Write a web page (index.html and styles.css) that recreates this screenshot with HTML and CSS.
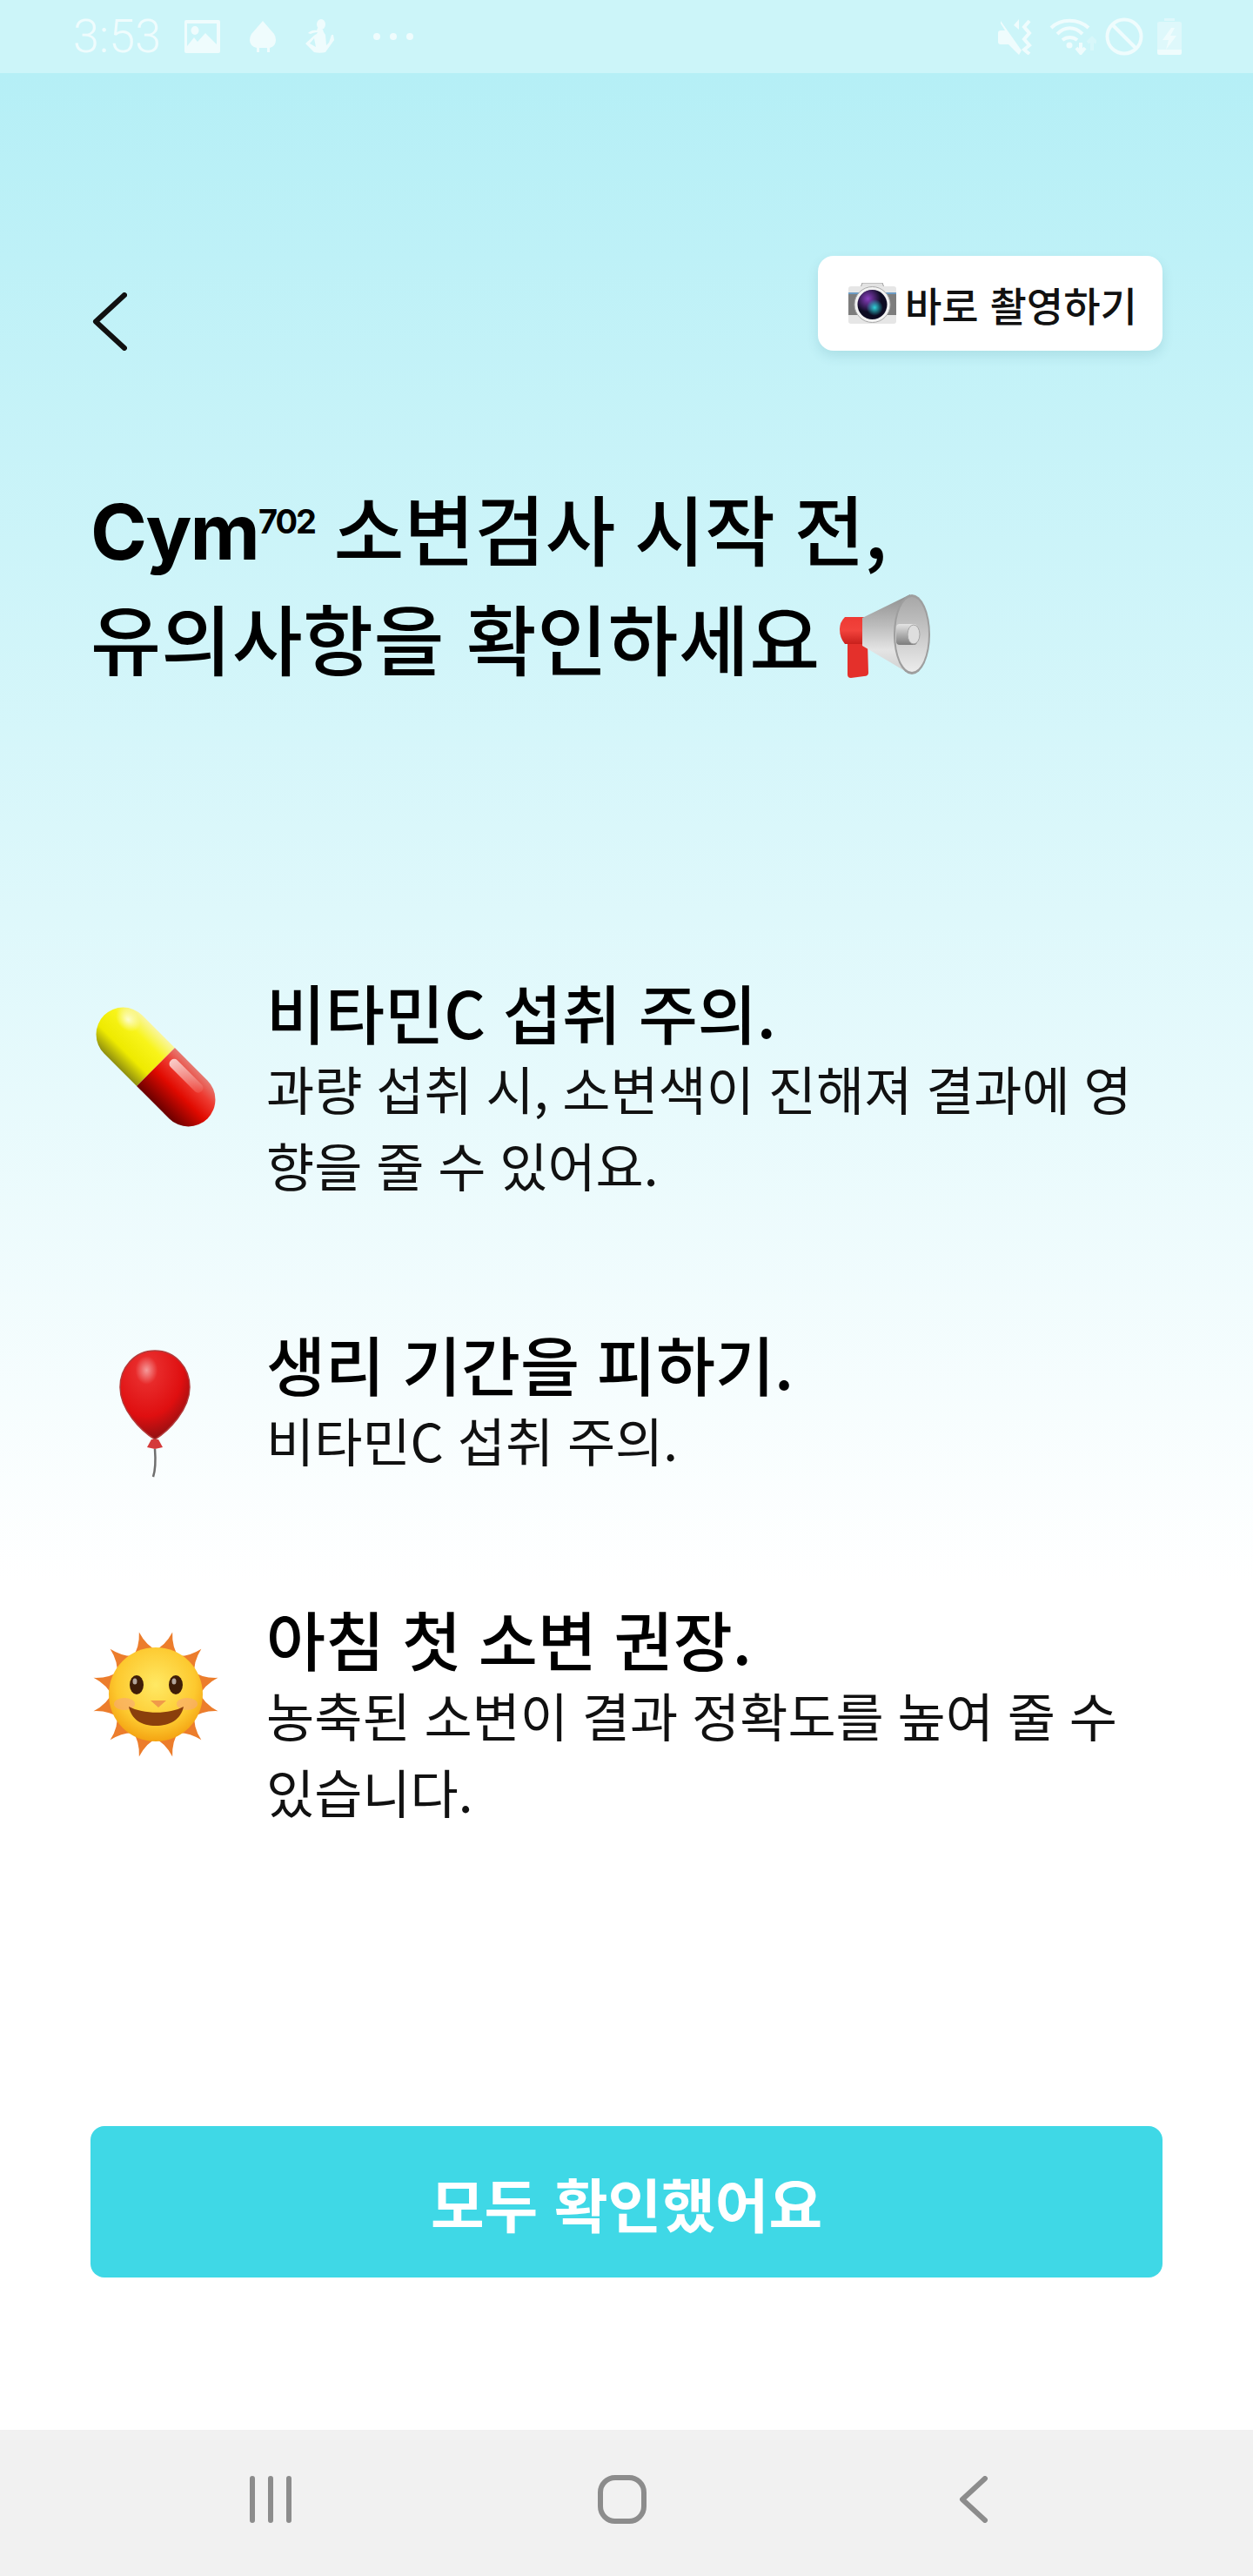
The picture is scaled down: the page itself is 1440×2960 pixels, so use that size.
FILE: index.html
```html
<!DOCTYPE html>
<html lang="ko">

<head>
    <meta charset="UTF-8">
    <meta name="viewport" content="width=device-width, initial-scale=1.0">
    <title>Cym702</title>
    <link rel="stylesheet" href="styles.css">
</head>

<body>
    <div class="screen">
        <div class="status-bar">
            <div class="status-left">
                <span class="clock">3:53</span>
                <svg class="st-image" viewBox="0 0 41 38">
                    <path fill-rule="evenodd" d="M2 0H39A2 2 0 0 1 41 2V36A2 2 0 0 1 39 38H2A2 2 0 0 1 0 36V2A2 2 0 0 1 2 0ZM3 4V30L11 20 15 25 24 15 37 28V4Z" />
                    <ellipse cx="12" cy="12" rx="4.500" ry="5" />
                </svg>
                <svg class="st-drop" viewBox="0 0 30 36">
                    <path d="M15 0 28 15Q30 18 30 22 30 29 23 31V36H20V31H11V36H8V31Q0 29 0 22 0 18 2 15Z" />
                </svg>
                <svg class="st-figure" viewBox="0 0 35 40">
                    <ellipse cx="19" cy="6" rx="5" ry="6" />
                    <path d="M15 10 14 13C10 12 6 14 4 16L7 17C9 16 12 15 15 15L14 17C11 18 9 21 1 28L11 38C15 39 20 39 24 38L34 24 33 18 31 18 28 27 25 30 24 18 22 15 21 12ZM11 22 13 32 6 28Z" fill-rule="evenodd" />
                </svg>
                <div class="st-dots"><i></i><i></i><i></i></div>
            </div>
            <div class="status-right">
                <svg class="st-mute" viewBox="0 0 41 41">
                    <path d="M3 2 27 36 24 41 12 29H3A3 3 0 0 1 0 26V16A3 3 0 0 1 3 13H8L3 5ZM24 0V12L18 7Z" />
                    <path d="M36 2 30 9 36 16 30 23 36 30 30 35 36 40" fill="none" stroke-width="4" />
                </svg>
                <svg class="st-wifi" viewBox="0 0 54 42">
                    <path d="M2 11C13 0 33 0 45 11M9 18C18 9 29 9 38 18M15 25C20 21 27 21 32 25" fill="none" stroke-width="4" />
                    <circle cx="23" cy="31" r="3.500" />
                    <path d="M36 28V38M31 34 36 40 41 34" fill="none" stroke-width="4" />
                    <path d="M49 37V23M44 28 49 23 54 28" fill="none" stroke-width="4" opacity="0.35" />
                </svg>
                <svg class="st-block" viewBox="0 0 44 44">
                    <circle cx="22" cy="22" r="19.500" fill="none" stroke-width="4" />
                    <path d="M9 9 35 35" fill="none" stroke-width="4" />
                </svg>
                <svg class="st-battery" viewBox="0 0 28 42">
                    <path d="M8 0H20V3H8Z" opacity="0.5" />
                    <path d="M2 4H26A2 2 0 0 1 28 6V36H0V6A2 2 0 0 1 2 4Z" opacity="0.5" />
                    <path d="M0 36H28V40A2 2 0 0 1 26 42H2A2 2 0 0 1 0 40Z" />
                    <path d="M16 11 6 25H13L10 36 22 20H15L20 11Z" />
                </svg>
            </div>
        </div>

        <main class="content">
            <div class="top-row">
                <svg class="back" viewBox="0 0 40 67">
                    <path d="M37 3 4 33.500 37 64" fill="none" stroke="#111" stroke-width="6" stroke-linecap="round" stroke-linejoin="round" />
                </svg>
                <div class="shoot-btn">
                    <svg class="ic-camera" viewBox="0 0 55 48">
                        <defs>
                            <radialGradient id="lens-purple" cx="35%" cy="30%" r="45%">
                                <stop offset="0" stop-color="#8a3fc0" />
                                <stop offset="1" stop-color="#8a3fc0" stop-opacity="0" />
                            </radialGradient>
                            <radialGradient id="lens-cyan" cx="58%" cy="60%" r="28%">
                                <stop offset="0" stop-color="#2fd0d8" />
                                <stop offset="1" stop-color="#2fd0d8" stop-opacity="0" />
                            </radialGradient>
                        </defs>
                        <path d="M13 8 16 0H39L42 8Z" fill="#e2e2e2" stroke="#a0a0a0" />
                        <rect x="0" y="4" width="55" height="43" rx="3" fill="#e6e6e6" />
                        <rect x="0" y="11" width="55" height="2" fill="#6d9cc4" />
                        <rect x="0" y="13" width="55" height="24" fill="#7d7d7d" />
                        <circle cx="27.500" cy="25" r="20.500" fill="#f2f2f2" stroke="#aaa" />
                        <circle cx="27.500" cy="25" r="17" fill="#0d0b22" />
                        <circle cx="27.500" cy="25" r="17" fill="url(#lens-purple)" />
                        <circle cx="27.500" cy="25" r="17" fill="url(#lens-cyan)" />
                    </svg>
                    <span>바로 촬영하기</span>
                </div>
            </div>

            <h1 class="title">
                <span class="title-first"><span class="brand">Cym<sup>702</sup></span> 소변검사 시작 전,</span><br>
                <span class="title-second">유의사항을 확인하세요</span>
                <svg class="ic-mega" viewBox="0 0 106 96">
                    <defs>
                        <linearGradient id="cone" x1="0" y1="0" x2="0" y2="1">
                            <stop offset="0" stop-color="#8f8f8f" />
                            <stop offset="0.4" stop-color="#bdbdbd" />
                            <stop offset="0.7" stop-color="#e4e4e4" />
                            <stop offset="1" stop-color="#cfcfcf" />
                        </linearGradient>
                        <linearGradient id="bell" x1="0" y1="0" x2="0" y2="1">
                            <stop offset="0" stop-color="#a8a8a8" />
                            <stop offset="0.5" stop-color="#c8c8c8" />
                            <stop offset="1" stop-color="#ececec" />
                        </linearGradient>
                        <linearGradient id="tube" x1="0" y1="0" x2="0" y2="1">
                            <stop offset="0" stop-color="#e4e4e4" />
                            <stop offset="1" stop-color="#7d7d7d" />
                        </linearGradient>
                        <linearGradient id="collar" x1="0" y1="0" x2="0" y2="1">
                            <stop offset="0" stop-color="#ee3a34" />
                            <stop offset="0.5" stop-color="#f2433c" />
                            <stop offset="1" stop-color="#c9201c" />
                        </linearGradient>
                    </defs>
                    <path d="M11 56H34L35 90Q35 94 30 94L15 96Q11 96 11 92Z" fill="#e4302b" />
                    <path d="M8 26H34V57H8Q2 50 2 40 2 32 8 26Z" fill="url(#collar)" />
                    <path d="M28 27 83 0 82 91 28 59Z" fill="url(#cone)" />
                    <ellipse cx="85" cy="46" rx="21" ry="46" fill="#9e9e9e" />
                    <ellipse cx="85" cy="46" rx="19" ry="43" fill="url(#bell)" />
                    <rect x="67" y="34" width="24" height="24" rx="4" fill="url(#tube)" />
                    <ellipse cx="87" cy="46" rx="7" ry="11" fill="#dedede" stroke="#a5a5a5" />
                </svg>
            </h1>

            <div class="notice-list">
                <div class="notice">
                    <svg class="notice-icon" viewBox="0 0 150 170">
                        <defs>
                            <linearGradient id="pill-y" x1="0" y1="0" x2="0" y2="1">
                                <stop offset="0" stop-color="#f9f6a0" />
                                <stop offset="0.3" stop-color="#f8f41a" />
                                <stop offset="0.7" stop-color="#eeea00" />
                                <stop offset="1" stop-color="#8f8f10" />
                            </linearGradient>
                            <linearGradient id="pill-r" x1="0" y1="0" x2="0" y2="1">
                                <stop offset="0" stop-color="#e57a72" />
                                <stop offset="0.25" stop-color="#ee3a30" />
                                <stop offset="0.55" stop-color="#e00a00" />
                                <stop offset="1" stop-color="#6a0000" />
                            </linearGradient>
                            <radialGradient id="pill-cap" cx="50%" cy="50%" r="50%">
                                <stop offset="0" stop-color="#fff" stop-opacity="0.75" />
                                <stop offset="1" stop-color="#fff" stop-opacity="0" />
                            </radialGradient>
                            <linearGradient id="pill-shine" x1="0" y1="0" x2="1" y2="0">
                                <stop offset="0" stop-color="#fbdcd9" stop-opacity="0.9" />
                                <stop offset="1" stop-color="#fbdcd9" stop-opacity="0.1" />
                            </linearGradient>
                        </defs>
                        <g transform="rotate(45 75 82)">
                            <path d="M75 51H22A31 31 0 0 0 22 113H75Z" fill="url(#pill-y)" />
                            <path d="M75 51H128A31 31 0 0 1 128 113H75Z" fill="url(#pill-r)" />
                            <ellipse cx="14" cy="66" rx="16" ry="12" fill="url(#pill-cap)" />
                            <rect x="82" y="59" width="50" height="11" rx="5" fill="url(#pill-shine)" />
                        </g>
                    </svg>
                    <div class="notice-text">
                        <h2>비타민C 섭취 주의.</h2>
                        <p>과량 섭취 시, 소변색이 진해져 결과에 영향을 줄 수 있어요.</p>
                    </div>
                </div>
                <div class="notice">
                    <svg class="notice-icon" viewBox="0 0 150 170">
                        <defs>
                            <radialGradient id="balloon" cx="38%" cy="22%" r="80%">
                                <stop offset="0" stop-color="#f59a9a" />
                                <stop offset="0.2" stop-color="#e82a2a" />
                                <stop offset="0.65" stop-color="#df0f10" />
                                <stop offset="1" stop-color="#8d1012" />
                            </radialGradient>
                        </defs>
                        <path d="M74 4C98 4 114 24 114 46 114 72 90 96 74 106 58 96 34 72 34 46 34 24 50 4 74 4Z" fill="url(#balloon)" stroke="#b33a3a" stroke-width="1.500" />
                        <path d="M70 106H78L83 115 74 117 65 115Z" fill="#d43a3a" />
                        <path d="M74 117C75 130 75 140 72 149" fill="none" stroke="#6f6f6f" stroke-width="2.500" />
                    </svg>
                    <div class="notice-text">
                        <h2>생리 기간을 피하기.</h2>
                        <p>비타민C 섭취 주의.</p>
                    </div>
                </div>
                <div class="notice">
                    <svg class="notice-icon" viewBox="0 0 150 170">
                        <defs>
                            <radialGradient id="sun-face" cx="50%" cy="40%" r="60%">
                                <stop offset="0" stop-color="#ffe964" />
                                <stop offset="0.7" stop-color="#fdc92f" />
                                <stop offset="1" stop-color="#f4a312" />
                            </radialGradient>
                        </defs>
                        <g transform="translate(1 -6)">
                            <g fill="#ec7d2c">
                                <path d="M-16 -47Q-4 -56 0 -74 4 -56 16 -47Z" transform="translate(74 89) rotate(15)" />
                                <path d="M-16 -47Q-4 -56 0 -74 4 -56 16 -47Z" transform="translate(74 89) rotate(45)" />
                                <path d="M-16 -47Q-4 -56 0 -74 4 -56 16 -47Z" transform="translate(74 89) rotate(75)" />
                                <path d="M-16 -47Q-4 -56 0 -74 4 -56 16 -47Z" transform="translate(74 89) rotate(105)" />
                                <path d="M-16 -47Q-4 -56 0 -74 4 -56 16 -47Z" transform="translate(74 89) rotate(135)" />
                                <path d="M-16 -47Q-4 -56 0 -74 4 -56 16 -47Z" transform="translate(74 89) rotate(165)" />
                                <path d="M-16 -47Q-4 -56 0 -74 4 -56 16 -47Z" transform="translate(74 89) rotate(195)" />
                                <path d="M-16 -47Q-4 -56 0 -74 4 -56 16 -47Z" transform="translate(74 89) rotate(225)" />
                                <path d="M-16 -47Q-4 -56 0 -74 4 -56 16 -47Z" transform="translate(74 89) rotate(255)" />
                                <path d="M-16 -47Q-4 -56 0 -74 4 -56 16 -47Z" transform="translate(74 89) rotate(285)" />
                                <path d="M-16 -47Q-4 -56 0 -74 4 -56 16 -47Z" transform="translate(74 89) rotate(315)" />
                                <path d="M-16 -47Q-4 -56 0 -74 4 -56 16 -47Z" transform="translate(74 89) rotate(345)" />
                            </g>
                            <circle cx="74" cy="89" r="54" fill="url(#sun-face)" />
                            <ellipse cx="38" cy="100" rx="12" ry="7" fill="#f8a878" opacity="0.6" />
                            <ellipse cx="110" cy="100" rx="12" ry="7" fill="#f8a878" opacity="0.6" />
                            <ellipse cx="52" cy="78" rx="8" ry="11" fill="#3f1d08" />
                            <ellipse cx="97" cy="78" rx="8" ry="11" fill="#3f1d08" />
                            <ellipse cx="50" cy="74" rx="2.500" ry="3.500" fill="#fff" opacity="0.6" />
                            <ellipse cx="95" cy="74" rx="2.500" ry="3.500" fill="#fff" opacity="0.6" />
                            <path d="M68 96H86L77 104Z" fill="#f09a4a" />
                            <path d="M43 103C60 112 90 112 106 103 103 118 90 125 74 125 58 125 46 118 43 103Z" fill="#8a3f0c" />
                        </g>
                    </svg>
                    <div class="notice-text">
                        <h2>아침 첫 소변 권장.</h2>
                        <p>농축된 소변이 결과 정확도를 높여 줄 수 있습니다.</p>
                    </div>
                </div>
            </div>

            <div class="confirm-btn">모두 확인했어요</div>
        </main>

        <div class="nav-bar">
            <svg class="nav-recent" viewBox="0 0 48 54">
                <path d="M3 3V51M24 3V51M45 3V51" fill="none" stroke-width="6" stroke-linecap="round" />
            </svg>
            <svg class="nav-home" viewBox="0 0 58 58">
                <rect x="4" y="4" width="50" height="50" rx="17" fill="none" stroke-width="6" />
            </svg>
            <svg class="nav-back" viewBox="0 0 34 54">
                <path d="M30 3 4 27 30 51" fill="none" stroke-width="6" stroke-linecap="round" stroke-linejoin="round" />
            </svg>
        </div>
    </div>
</body>

</html>
```

FILE: styles.css
```css
* {
    box-sizing: border-box;
}

body {
    margin: 0;
    font-family: 'Noto Sans CJK KR', 'Noto Sans', sans-serif;
    color: #000;
}

.screen {
    width: 1440px;
    height: 2960px;
    display: flex;
    flex-direction: column;
    overflow: hidden;
    background: #fff;
}

/* status bar */
.status-bar {
    height: 84px;
    flex: none;
    display: flex;
    justify-content: space-between;
    align-items: center;
    padding: 0 82px 0 84px;
    background: #ccf5f9;
}

.status-left,
.status-right {
    display: flex;
    align-items: center;
}

.status-bar svg {
    fill: #effcfd;
    stroke: #effcfd;
    stroke-width: 0;
    flex: none;
}

.clock {
    font-family: Roboto, sans-serif;
    font-weight: 300;
    font-size: 54px;
    line-height: 84px;
    color: #effcfd;
}

.st-image {
    width: 41px;
    height: 38px;
    margin-left: 27px;
}

.st-drop {
    width: 30px;
    height: 36px;
    margin-left: 34px;
}

.st-figure {
    width: 35px;
    height: 40px;
    margin-left: 33px;
}

.st-dots {
    display: flex;
    gap: 11px;
    margin-left: 44px;
}

.st-dots i {
    width: 8px;
    height: 8px;
    border-radius: 50%;
    background: #effcfd;
}

.st-mute {
    width: 41px;
    height: 41px;
}

.st-wifi {
    width: 54px;
    height: 42px;
    margin-left: 18px;
}

.st-block {
    width: 44px;
    height: 44px;
    margin-left: 10px;
}

.st-battery {
    width: 28px;
    height: 42px;
    margin-left: 16px;
}

/* main */
.content {
    flex: 1;
    display: flex;
    flex-direction: column;
    padding: 210px 104px 175px;
    background: linear-gradient(180deg, #b5eff6 0%, #ffffff 64%, #ffffff 100%);
}

.top-row {
    display: flex;
    justify-content: space-between;
    align-items: flex-end;
}

.back {
    width: 40px;
    height: 67px;
    margin-left: 2px;
}

.shoot-btn {
    width: 396px;
    height: 109px;
    display: flex;
    align-items: center;
    padding-left: 35px;
    gap: 10px;
    background: #fff;
    border-radius: 18px;
    box-shadow: 0 6px 14px rgba(0, 90, 110, 0.12);
    font-size: 46px;
    font-weight: 500;
    color: #111;
}

.ic-camera {
    width: 55px;
    height: 48px;
}

.title {
    margin: 142px 0 0;
    font-size: 88px;
    line-height: 120px;
    font-weight: 500;
    white-space: nowrap;
}

.title-first {
    word-spacing: -3px;
}

.title-second {
    letter-spacing: 0.4px;
}

.brand {
    font-family: Inter, 'Liberation Sans', sans-serif;
    font-weight: 700;
    letter-spacing: -2px;
}

.brand sup {
    font-size: 38px;
    line-height: 0;
    vertical-align: 30px;
}

.ic-mega {
    width: 106px;
    height: 96px;
    vertical-align: -10px;
    margin-left: -4px;
}

.notice-list {
    margin-top: 333px;
    display: flex;
    flex-direction: column;
    gap: 146px;
}

.notice {
    display: flex;
    gap: 52px;
}

.notice-icon {
    width: 150px;
    height: 170px;
    margin: 20px 0 -60px;
    flex: none;
}

.notice-text {
    margin-top: -6px;
}

.notice-text h2 {
    margin: 0;
    font-size: 74px;
    line-height: 88px;
    font-weight: 500;
    word-spacing: -1px;
}

.notice-text p {
    margin: 0;
    font-size: 60px;
    line-height: 88px;
    word-break: break-all;
    word-spacing: -1px;
    color: #111;
}

.confirm-btn {
    margin-top: auto;
    height: 174px;
    display: flex;
    justify-content: center;
    align-items: center;
    background: #3fd8e6;
    border-radius: 16px;
    color: #fff;
    font-size: 67px;
    font-weight: 700;
}

/* nav bar */
.nav-bar {
    height: 168px;
    flex: none;
    display: flex;
    align-items: center;
    padding: 0 0 8px 287px;
    background: #f1f1f1;
}

.nav-bar svg {
    stroke: #8c8c8c;
}

.nav-recent {
    width: 48px;
    height: 54px;
}

.nav-home {
    width: 58px;
    height: 58px;
    margin-left: 351px;
}

.nav-back {
    width: 34px;
    height: 54px;
    margin-left: 358px;
}
```
